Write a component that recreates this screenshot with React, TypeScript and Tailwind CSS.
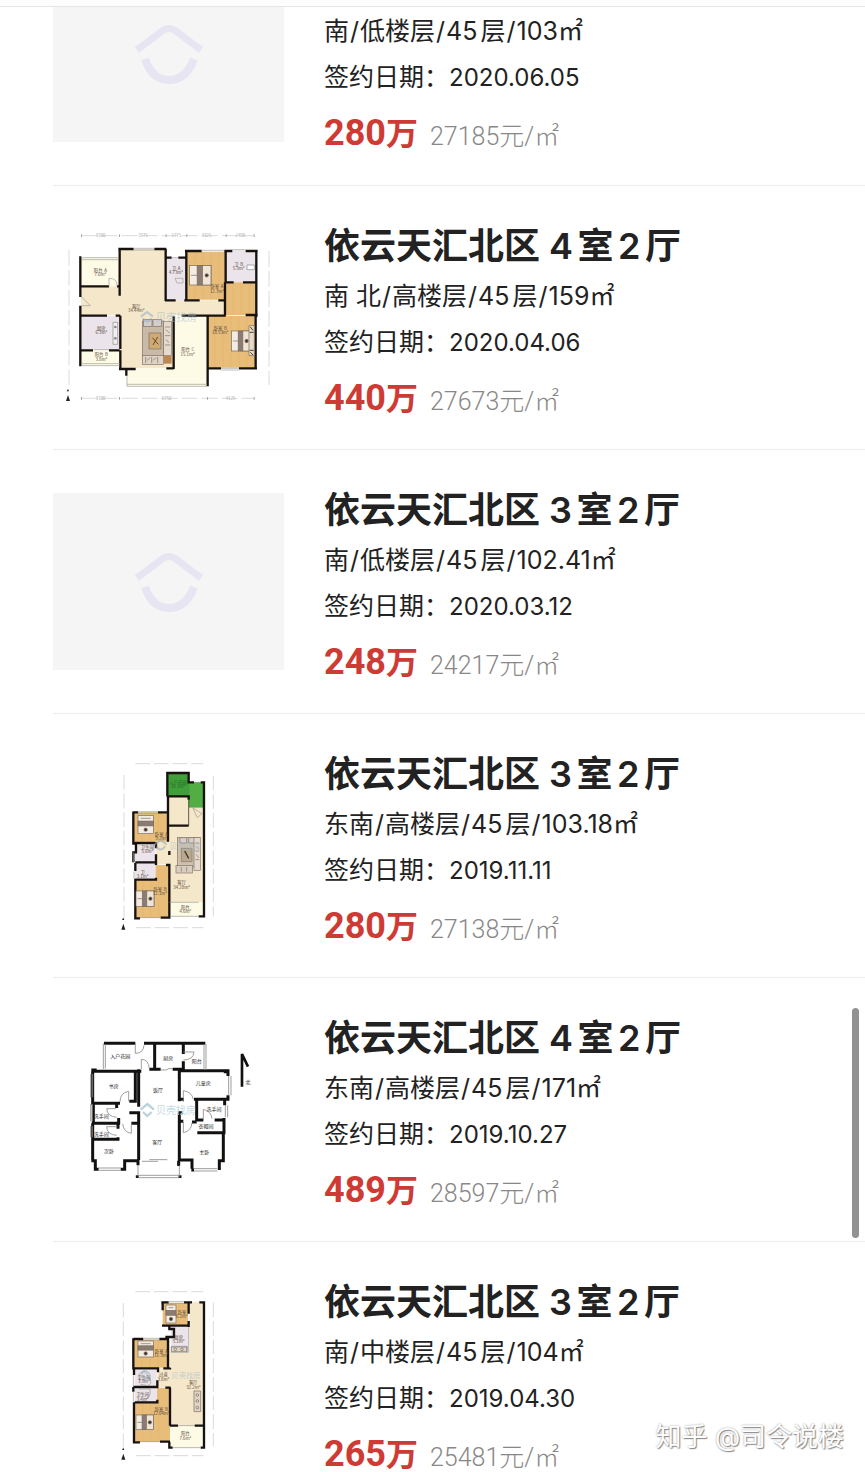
import { Fragment, type ReactNode } from "react";

const INK = "#17120f";
const FLOOR = "#f5e7c9";
const WOOD = "#e7bd79";
const TILE = "#ebe4ea";
const CREAM = "#fdfbe6";

function Label({ x, y, children, fill = "#5a4a40" }: { x: number; y: number; children: ReactNode; fill?: string }) {
  return (
    <text x={x} y={y} fontSize={13} fill={fill} textAnchor="middle">
      {children}
    </text>
  );
}

function Room({ x, y, name, area }: { x: number; y: number; name: string; area: string }) {
  return (
    <>
      <Label x={x} y={y}>{name}</Label>
      <Label x={x} y={y + 13}>{area}</Label>
    </>
  );
}

function Bed({ x, y, w, h }: { x: number; y: number; w: number; h: number }) {
  return (
    <g stroke="#776a60" strokeWidth={2}>
      <rect x={x} y={y} width={w} height={h} fill="#f3ece3" />
      <rect x={x + w * 0.35} y={y} width={w * 0.25} height={h} fill="#8b7b70" />
      <rect x={x + w * 0.6} y={y} width={w * 0.4} height={h} fill="#efe4d6" />
      <path d={`M${x + 4} ${y + h / 2}h${w * 0.28}`} />
      <circle cx={x + w * 0.8} cy={y + h / 2} r={5} fill="#41362f" />
    </g>
  );
}

function BedDown({ x, y, w, h }: { x: number; y: number; w: number; h: number }) {
  return (
    <g stroke="#776a60" strokeWidth={2}>
      <rect x={x} y={y} width={w} height={h} fill="#f3ece3" />
      <rect x={x} y={y + h * 0.3} width={w} height={h * 0.27} fill="#8b7b70" />
      <path d={`M${x + 8} ${y + 8}h${w - 16}`} />
      <circle cx={x + w / 2} cy={y + h * 0.78} r={5} fill="#41362f" />
    </g>
  );
}

function Sofas({ x, y }: { x: number; y: number }) {
  return (
    <g transform={`translate(${x} ${y})`} stroke="#7d7065" strokeWidth={2}>
      <rect x={0} y={4} width={64} height={106} fill="#c8baa7" />
      <rect x={4} y={0} width={25} height={20} fill="#d5cdca" />
      <rect x={32} y={0} width={25} height={20} fill="#d5cdca" />
      <rect x={20} y={40} width={36} height={48} fill="#d0aa75" />
      <path d="M30 54l18 20M46 52L32 76" stroke="#65462a" strokeWidth={3} />
      <rect x={64} y={6} width={24} height={102} fill="#e5dbcd" />
      <path d="M68 22h16M68 48h16M68 76h16M70 30l12 10M70 60l10 8" />
      <rect x={0} y={108} width={64} height={26} fill="#ded3c5" />
      <path d="M10 112v18M28 112v18M46 112v18M14 122l10-8M32 122l10-8" />
    </g>
  );
}

function Compass({ x, y }: { x: number; y: number }) {
  return <path d={`M${x} ${y - 26}l-4 7h7zM${x} ${y - 14}v6M${x - 6} ${y + 10}l6-18 6 18z`} fill="#222" />;
}

function PlanFrame({ shift, children, title }: { shift: string; children: ReactNode; title: string }) {
  return (
    <svg viewBox="0 0 231 177" className="h-auto w-full" role="img" aria-label={title}>
      <g transform={shift} fontFamily="'Noto Sans CJK SC', sans-serif">
        {children}
      </g>
    </svg>
  );
}

function Brand({ x, y, size = 31 }: { x: number; y: number; size?: number }) {
  return (
    <g transform={`translate(${x} ${y})`} opacity={0.55}>
      <path d="M-18 0L0-14 18 0M-13 5Q0 24 13 5" fill="none" stroke="#8eafc8" strokeWidth={6} />
      <text x={26} y={12} fontSize={size} fill="#9fbdd2">贝壳找房</text>
    </g>
  );
}

function WidePlan() {
  return (
    <PlanFrame shift="translate(2 -4) scale(.3333)" title="户型图">
      <path d="M78 184H194V72H332V226H508V270H356V430H194V270H78z" fill={FLOOR} />
      <path d="M78 96H192V184H78zM78 376H194V422H78z" fill={CREAM} />
      <path d="M78 272H196V374H78zM332 100H394V226H332zM512 76H602V172H512z" fill={TILE} />
      <path d="M396 80H510V224H396zM510 172H602V270H510zM458 272H602V428H458z" fill={WOOD} />
      <path d="M356 272H456V484H216V430H356z" fill={CREAM} />
      <g stroke="#d39a4b" strokeWidth={1} opacity={0.45}>
        <path d="M420 80V224M444 80V224M468 80V224M492 80V224M534 172V270M558 172V270M582 172V270M480 272V428M504 272V428M528 272V428M552 272V428M576 272V428" />
      </g>
      <g fill="none" stroke={INK} strokeWidth={7}>
        <path d="M76 94V216M76 242V424M76 184H162M186 184H196M194 70V212M190 72H236M298 72H334M332 72V228M332 98H350M370 98H392M394 74V226M390 78H440M508 78H532M572 78H608M512 76V174M604 74V276M512 172H536M564 172H602M510 172V272M330 226H362M388 226H434M490 226H510M78 272H156M182 272H196M196 272V372M76 376H114M162 376H194M196 376V430M192 432H242M214 432V452M334 430H356M356 274V432M380 272H512M458 272V484M572 270H608M602 272V432M456 430H498M552 430H606" />
      </g>
      <g fill="none" stroke="#9d9d98" strokeWidth={2}>
        <path d="M78 98H192M80 104H190M80 416H194M80 422H194M216 484H456M216 478H456M216 454V484M236 70H298M236 75H298M440 76H508M532 74H572M498 430H552M498 435H552M116 374H162M350 98H370" />
        <path d="M80 216L106 242H80M162 184v-24q26 0 24 24M360 160h24v14h-18z" />
      </g>
      <g fill="none" stroke="#b7b7b7" strokeWidth={1.5} strokeDasharray="48 12">
        <path d="M80 32H598M80 520H598M42 74V480M642 78V480" />
      </g>
      <path
        d="M78 28h3v8h-3zM192 28h3v8h-3zM332 28h3v8h-3zM394 28h3v8h-3zM512 28h3v8h-3zM596 28h3v8h-3zM78 516h3v8h-3zM192 516h3v8h-3zM456 516h3v8h-3zM596 516h3v8h-3z"
        fill="#a5a5a5"
      />
      <Label x={137} y={36} fill="#aaa">3300</Label>
      <Label x={264} y={36} fill="#aaa">3775</Label>
      <Label x={364} y={36} fill="#aaa">1775</Label>
      <Label x={454} y={36} fill="#aaa">3325</Label>
      <Label x={556} y={36} fill="#aaa">2400</Label>
      <Label x={137} y={525} fill="#aaa">3300</Label>
      <Label x={335} y={525} fill="#aaa">6750</Label>
      <Label x={527} y={525} fill="#aaa">4125</Label>
      <Bed x={404} y={122} w={64} h={58} />
      <Bed x={530} y={318} w={56} h={60} />
      <path d="M582 302h16v90h-16z" fill="#e7dac8" stroke="#78695b" strokeWidth={2} />
      <path d="M584 322h12M584 376h12M586 306l8 10M586 382l8 8" stroke="#4c3d30" strokeWidth={3} />
      <path d="M174 292h14v66h-14z" fill="#f3eff1" stroke="#888" strokeWidth={2} />
      <circle cx={181} cy={306} r={4} fill="#888" />
      <circle cx={181} cy={340} r={4} fill="#888" />
      <path d="M576 120h22v14h-22z" fill="#fff" stroke="#888" strokeWidth={2} />
      <Sofas x={262} y={284} />
      <rect x={326} y={392} width={24} height={24} fill="#bd8752" />
      <Brand x={276} y={275} />
      <Room x={136} y={141} name="阳台A" area="7.6m²" />
      <Room x={244} y={249} name="客厅" area="34.44m²" />
      <Room x={363} y={134} name="卫A" area="4.73m²" />
      <Room x={486} y={190} name="卧室A" area="12.7m²" />
      <Room x={551} y={123} name="卫B" area="5.3m²" />
      <Room x={139} y={315} name="厨房" area="6.3m²" />
      <Room x={139} y={394} name="阳台B" area="3.8m²" />
      <Room x={398} y={379} name="阳台C" area="15.1m²" />
      <Room x={496} y={314} name="卧室B" area="18.53m²" />
      <Compass x={39} y={518} />
    </PlanFrame>
  );
}

function GardenPlan() {
  return (
    <PlanFrame shift="translate(57 -2) scale(.3333)" title="户型图">
      <path d="M172 54H236V82H280V158H236V124H172z" fill="#3f9f38" />
      <path d="M238 84H278V156H238z" fill="#52ad43" />
      <path d="M172 126H236V158H280V442H178V328H138V260H178z" fill={FLOOR} />
      <path d="M178 442H280V484H178z" fill={CREAM} />
      <path d="M72 172H176V260H72zM76 374H136V330H176V488H76z" fill={WOOD} />
      <path d="M74 264H136V370H74z" fill={TILE} />
      <path d="M96 172V260M120 172V260M144 172V260M98 374V488M122 374V488M146 332V488" stroke="#d39a4b" opacity={0.45} />
      <g fill="none" stroke={INK} strokeWidth={7}>
        <path d="M172 124V54H236V82H252M272 82H282V484H266M170 124H236V134M174 124V260M176 212H236M68 172H84M144 172H176M70 170V266H78V292H70V322M70 264H136M138 262V280M138 298V322H76M138 322V330M76 324V348M74 374H138V368M76 372V490H90M152 488H178V330H168M178 288V300M178 440V486" />
      </g>
      <path d="M236 134V212" stroke={INK} strokeWidth={2} />
      <g fill="none" stroke="#989891" strokeWidth={2}>
        <path d="M84 170H144M84 175H144M90 488H152M178 442H266M180 484H266M70 292V322M72 350V372M254 82h18M248 158L262 188 276 176z" />
      </g>
      <g fill="none" stroke="#b5b5b5" strokeWidth={1.5} strokeDasharray="44 12">
        <path d="M76 26H280M78 518H280M42 60V490M310 62V484" />
      </g>
      <BedDown x={84} y={182} w={46} h={54} />
      <Bed x={78} y={408} w={54} h={46} />
      <g transform="translate(198 248)" stroke="#827568" strokeWidth={2}>
        <rect x={4} y={0} width={66} height={88} fill="#cfc1ad" />
        <path d="M12 0h20v16H12zM38 0h20v16H38z" fill="#d7d0cc" />
        <path d="M16 32h32v40H16z" fill="#baa98e" />
        <path d="M26 40l12 22" stroke="#3d332c" strokeWidth={4} />
        <rect x={54} y={0} width={20} height={98} fill="#e3dacd" />
        <path d="M58 16h12M58 40h12M58 66h12M60 26l8 8M60 50l8 10" />
        <rect x={0} y={84} width={50} height={22} fill="#d8cdbf" />
        <path d="M16 88v14M32 88v14" />
      </g>
      <Label x={204} y={86} fill="#286928">入户花园</Label>
      <Label x={204} y={99} fill="#286928">10.3m²</Label>
      <Room x={154} y={242} name="卧室A" area="9.2m²" />
      <Room x={112} y={282} name="卫生间" area="5.6m²" />
      <Label x={98} y={356}>卫</Label>
      <Label x={98} y={368}>3.1m²</Label>
      <Room x={150} y={408} name="卧室B" area="12.1m²" />
      <Room x={215} y={388} name="客厅" area="34.28m²" />
      <Room x={226} y={461} name="阳台" area="4.6m²" />
      <Brand x={152} y={269} size={24} />
      <Compass x={40} y={514} />
    </PlanFrame>
  );
}

function LinePlan() {
  return (
    <PlanFrame shift="translate(27 9) scale(.3333)" title="户型图">
      <g fill="none" stroke="#111" strokeWidth={9}>
        <path d="M72 40H166M192 40H376M224 40V118H208M224 118H242M278 118H298V214M310 40V72M310 94V118H296M34 120H50M34 124H184M166 124V214H148M38 124V220H120M40 216V280H116V264M110 218V234M38 280V328H114V322M114 278V296M38 328V390M176 118V230M148 248H176V390M34 392H46V418H56M122 418H134V392H174V406M154 280H174M298 122H444V138M436 124V130M444 196V208H342M300 208H312M350 212V270H370M404 270H432M434 208V226M432 264V308H352M294 248H308M298 248V390H336V416M300 274H310M336 276H350M296 392V408M430 308V392H418V420M334 420H342M172 436V444M300 436V444" />
      </g>
      <g fill="none" stroke="#8c8c8c" strokeWidth={2.5}>
        <path d="M70 40V118M76 42V116M372 42V120M378 42V120M32 132V202M38 132V202M446 138V196M453 138V196M32 222V274M37 222V274M32 288V322M37 288V322M436 226V262M443 226V262M56 414H122M56 421H122M342 416H412M342 423H412M174 436H298M174 443H298M174 406V440M298 406V440" />
        <path d="M166 40v30q24 0 26-24M184 118V88q22 0 24 28M310 66h32q-2 24-32 24M120 216q0-28 26-32v30M310 216v-34q26 4 30 26M108 236H80q2 24 30 26M154 280v30q-22-2-26-28M80 290h32M80 290q0 24 30 26M310 276v32q24-4 26-30M370 270v-32q24 6 26 28M242 120h16l8-4h12M186 394h48M208 389h54" />
      </g>
      <path d="M486 170V72l18 38" fill="none" stroke="#111" strokeWidth={8} />
      <g transform="translate(202 241)">
        <path d="M-20-2L0-19 20-2M-13 5L0 17 13 5" fill="none" stroke="#b9d2de" strokeWidth={7} />
        <text x={26} y={11} fontSize={30} fill="#c4dbe5">贝壳找房</text>
      </g>
      <g fontSize={15} fill="#222" textAnchor="middle">
        <text x={121} y={83}>入户花园</text>
        <text x={265} y={90}>厨房</text>
        <text x={350} y={98}>阳台</text>
        <text x={101} y={175}>书房</text>
        <text x={234} y={185}>饭厅</text>
        <text x={370} y={165}>儿童房</text>
        <text x={64} y={264}>洗手间</text>
        <text x={64} y={317}>洗手间</text>
        <text x={402} y={244}>洗手间</text>
        <text x={378} y={295}>衣帽间</text>
        <text x={87} y={370}>次卧</text>
        <text x={232} y={342}>客厅</text>
        <text x={373} y={373}>主卧</text>
        <text x={504} y={163}>北</text>
      </g>
    </PlanFrame>
  );
}

function LongPlan() {
  return (
    <PlanFrame shift="translate(57 0) scale(.3333)" title="户型图">
      <path d="M238 50H280V422H180V306H142V248H180V204H238z" fill={FLOOR} />
      <path d="M158 54H234V122H158zM72 164H178V248H72zM74 354H140V308H180V470H74z" fill={WOOD} />
      <path d="M182 126H236V200H182zM74 254H140V352H74z" fill={TILE} />
      <path d="M180 422H278V488H180z" fill={CREAM} />
      <path d="M96 164V248M120 164V248M144 164V248M98 356V470M122 356V470M146 310V470M182 54V122M206 54V122" stroke="#d39a4b" opacity={0.45} />
      <g fill="none" stroke={INK} strokeWidth={7}>
        <path d="M154 52H176M222 52H246M268 52H282V488H272M158 50V76M156 122H236M236 52V86M236 108V126M178 124V132H192V156H166M70 162H100M148 162H174V248M70 160V250H144V262M160 250H180V248M142 286V306H70M72 252V270M70 306V320M72 352V472H90M74 352H142V344M150 470H180M180 308V422M166 308H182M180 422H204M254 422H282M178 470V488H188" />
      </g>
      <g fill="none" stroke="#999990" strokeWidth={2}>
        <path d="M176 50H222M176 55H222M100 160H148M100 165H148M70 270V304M70 320V350M90 470H150M204 422H254M188 488H272M184 184H232V202M236 126V202H182M90 286q-12-20 12-28l18 24q8 16-8 20l-20-4M86 312h34q4 26-14 30" />
      </g>
      <g fill="none" stroke="#b5b5b5" strokeWidth={1.5} strokeDasharray="44 12">
        <path d="M76 20H280M78 512H280M40 54V488M310 52V484" />
      </g>
      <BedDown x={168} y={60} w={30} h={54} />
      <BedDown x={84} y={168} w={46} h={48} />
      <Bed x={78} y={390} w={52} h={44} />
      <g stroke="#776b60" strokeWidth={2} fill="#dfd5c7">
        <path d="M252 318h20v62h-20zM184 186h46v14h-46z" />
        <circle cx={262} cy={330} r={4} />
        <circle cx={262} cy={348} r={4} />
        <circle cx={262} cy={368} r={4} />
        <circle cx={196} cy={193} r={4} />
        <circle cx={216} cy={193} r={4} />
      </g>
      <Room x={216} y={87} name="卧室" area="6.2m²" />
      <Room x={206} y={162} name="厨房" area="5.1m²" />
      <Room x={154} y={204} name="卧室A" area="11.3m²" />
      <Room x={102} y={282} name="卫生间" area="3.9m²" />
      <Room x={160} y={274} name="过道" area="3.8m²" />
      <Room x={98} y={334} name="卫生间" area="3.4m²" />
      <Room x={154} y={378} name="卧室B" area="12.04m²" />
      <Room x={250} y={298} name="客厅" area="32.2m²" />
      <Room x={226} y={451} name="阳台" area="7.6m²" />
      <g opacity={0.6}>
        <path d="M92 268l14-12 14 12M96 274q10 12 20 0" fill="none" stroke="#8eafc8" strokeWidth={5} />
        <text x={184} y={278} fontSize={22} fill="#9fbdd2">贝壳找房</text>
      </g>
      <Compass x={40} y={514} />
    </PlanFrame>
  );
}

function Placeholder() {
  return (
    <svg viewBox="0 0 231 177" className="h-auto w-full shrink-0 bg-[#f5f5f5]" role="img" aria-label="暂无图片">
      <path d="M84 85L109 66Q116 61 123 66L148 85" fill="none" stroke="#e6e5f1" strokeWidth="7" />
      <path d="M92 94Q99 115 116 115T141 94" fill="none" stroke="#e6e5f1" strokeWidth="8" />
    </svg>
  );
}

type Deal = {
  title?: string;
  spec: string[];
  date: string;
  total: string;
  unit: string;
  picture: ReactNode;
};

const deals: Deal[] = [
  { spec: ["南", "低楼层", "45层", "103㎡"], date: "2020.06.05", total: "280", unit: "27185", picture: <Placeholder /> },
  { title: "依云天汇北区 4室2厅", spec: ["南 北", "高楼层", "45层", "159㎡"], date: "2020.04.06", total: "440", unit: "27673", picture: <WidePlan /> },
  { title: "依云天汇北区 3室2厅", spec: ["南", "低楼层", "45层", "102.41㎡"], date: "2020.03.12", total: "248", unit: "24217", picture: <Placeholder /> },
  { title: "依云天汇北区 3室2厅", spec: ["东南", "高楼层", "45层", "103.18㎡"], date: "2019.11.11", total: "280", unit: "27138", picture: <GardenPlan /> },
  { title: "依云天汇北区 4室2厅", spec: ["东南", "高楼层", "45层", "171㎡"], date: "2019.10.27", total: "489", unit: "28597", picture: <LinePlan /> },
  { title: "依云天汇北区 3室2厅", spec: ["南", "中楼层", "45层", "104㎡"], date: "2019.04.30", total: "265", unit: "25481", picture: <LongPlan /> },
];

function DealRow({ deal }: { deal: Deal }) {
  const clipped = !deal.title;
  return (
    <li className="ml-[53px] flex gap-10 border-b border-[#ececec]">
      <div
        className={
          clipped
            ? "flex h-[135px] w-[231px] shrink-0 flex-col justify-end overflow-hidden"
            : "w-[231px] shrink-0 pt-[43px]"
        }
      >
        {deal.picture}
      </div>
      <div className={clipped ? "min-w-0 flex-1 pt-px pb-[31px]" : "min-w-0 flex-1 pt-9 pb-[30px]"}>
        {deal.title && (
          <h2 className="mb-[3px] h-12 text-[36px] leading-[48px] font-semibold whitespace-nowrap">{deal.title}</h2>
        )}
        <p className="h-[46px] text-[25px] leading-[46px] whitespace-nowrap">
          {deal.spec.map((part, i) => (
            <Fragment key={part}>
              {i > 0 && <span className="mx-px">/</span>}
              {part}
            </Fragment>
          ))}
        </p>
        <p className="h-[46px] text-[25px] leading-[46px] whitespace-nowrap">
          签约日期：<time className="text-[24px]">{deal.date}</time>
        </p>
        <p className="mt-[11px] flex h-[43px] items-baseline gap-3 font-[Roboto,'Noto_Sans_CJK_SC',sans-serif] leading-[44px] whitespace-nowrap [text-autospace:no-autospace]">
          <strong className="text-[36px] font-bold text-[#ce3b34]">
            {deal.total}
            <span className="text-[32px]">万</span>
          </strong>
          <span className="text-[25px] font-light text-[#888]">{deal.unit}元/㎡</span>
        </p>
      </div>
    </li>
  );
}

export default function App() {
  return (
    <div className="relative flex h-screen flex-col overflow-hidden bg-white font-[Inter,'Noto_Sans_CJK_SC',sans-serif] text-[#222] [text-autospace:normal]">
      <header className="h-[7px] shrink-0 border-b border-[#e6e6e6] bg-[#fdfdfd]" />
      <main className="min-h-0 flex-1 overflow-hidden">
        <ul>
          {deals.map((deal) => (
            <DealRow key={deal.date} deal={deal} />
          ))}
        </ul>
      </main>
      <div className="absolute top-[1008px] right-[6px] h-[230px] w-[7px] rounded-full bg-[#929292]" />
      <p className="absolute right-[21px] bottom-[17px] text-[26px] leading-9 text-white [text-shadow:1px_1px_1px_#888,0_0_2px_#999]">
        知乎 @司令说楼
      </p>
    </div>
  );
}
